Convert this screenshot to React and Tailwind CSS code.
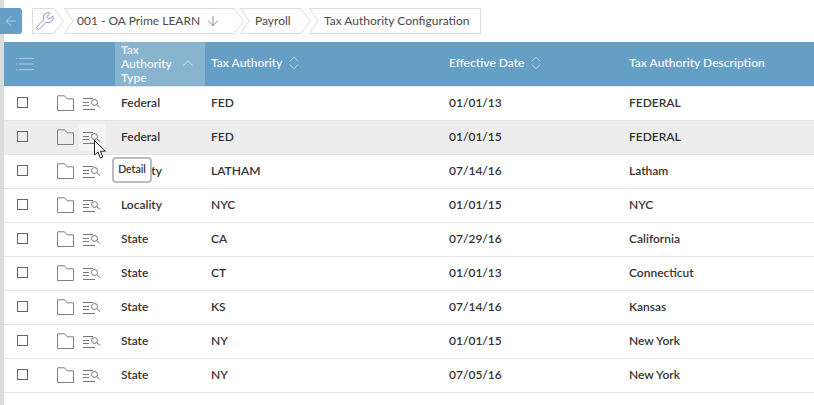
import { ArrowDown, ArrowLeft, ChevronUp, Wrench } from 'lucide-react';

const rows = [
  ['Federal', 'FED', '01/01/13', 'FEDERAL'],
  ['Federal', 'FED', '01/01/15', 'FEDERAL'],
  ['Locality', 'LATHAM', '07/14/16', 'Latham'],
  ['Locality', 'NYC', '01/01/15', 'NYC'],
  ['State', 'CA', '07/29/16', 'California'],
  ['State', 'CT', '01/01/13', 'Connecticut'],
  ['State', 'KS', '07/14/16', 'Kansas'],
  ['State', 'NY', '01/01/15', 'New York'],
  ['State', 'NY', '07/05/16', 'New York'],
];

function Crumb({ width, first, last, children, className }) {
  const h = 26;
  const w = width;
  const right = last ? `H${w - 0.5}V${h - 0.5}` : `H${w - 10}L${w - 0.5} 13L${w - 10} ${h - 0.5}`;
  const left = first ? 'H.5Z' : 'H.5L9 13Z';
  return (
    <div className={`relative h-[26px] flex items-center shrink-0 ${className || ''}`} style={{ width: w }}>
      <svg width={w} height={h} className="absolute inset-0" fill="white" stroke="#dcdcdc">
        <path d={`M.5 .5${right}${left}`} />
      </svg>
      <div className="relative flex items-center whitespace-nowrap">{children}</div>
    </div>
  );
}

function SortIcon() {
  return (
    <svg width="10" height="14" viewBox="0 0 10 14" fill="none" stroke="#b9d4e6" strokeWidth="1">
      <path d="M.8 5.5L5 1.2l4.2 4.3M.8 8.5L5 12.8l4.2-4.3" />
    </svg>
  );
}

function FolderIcon() {
  return (
    <svg width="17" height="16" viewBox="0 0 17 16" fill="none" stroke="#808080" strokeWidth="1">
      <path d="M.5 15.5V.8h7l2.6 3h6.4v11.7z" />
    </svg>
  );
}

function DetailIcon() {
  return (
    <svg width="18" height="13" viewBox="0 0 18 13" fill="none" stroke="#777" strokeWidth="1">
      <path d="M0 1.5h10M0 5.5h6M0 8.5h6M0 12.5h12" />
      <circle cx="11.5" cy="5.5" r="3" />
      <path d="M13.8 7.8l3.4 2.8" />
    </svg>
  );
}

function Row({ row, index }) {
  const hovered = index === 1;
  return (
    <div
      className={`grid grid-cols-[111px_90px_238px_180px_1fr] h-[34px] items-center border-b border-[#e6e6e6] text-[12px] font-semibold text-[#333] ${hovered ? 'bg-[#ededed]' : 'bg-white'}`}
    >
      <div className="flex items-center h-full">
        <div className="w-[11px] h-[11px] border border-[#666] ml-[13px] mb-[2px]" />
        <div className="ml-[29px] -mt-[1px]"><FolderIcon /></div>
        <div className={`ml-[5px] w-[27px] h-[27px] rounded-[3px] flex items-center pl-[4px] ${hovered ? 'bg-[#f5f5f5]' : ''}`}>
          <DetailIcon />
        </div>
      </div>
      <div className="pl-[6px] pb-[2px]">{row[0]}</div>
      <div className="pl-[6px] pb-[2px]">{row[1]}</div>
      <div className="pl-[6px] pb-[2px]">{row[2]}</div>
      <div className="pl-[6px] pb-[2px]">{row[3]}</div>
    </div>
  );
}

export default function App() {
  return (
    <div className="relative w-[814px] h-[405px] overflow-hidden bg-white font-['Lato',sans-serif] pl-[4px]">
      <div className="absolute left-0 top-0 bottom-0 w-[4px] bg-[#dcdcdc]" />

      {/* Breadcrumb */}
      <div className="relative h-[42px] flex items-start pt-[8px] -ml-[4px]">
        <div className="w-[22px] h-[26px] bg-[#659fc5] rounded-r-[3px] flex items-center justify-center shrink-0">
          <ArrowLeft size={16} strokeWidth={1} className="text-[#d5e5f0]" />
        </div>
        <div className="flex items-center ml-[10px] text-[12px] text-[#4a4a4a]">
          <Crumb width={32} first>
            <Wrench size={20} strokeWidth={1} className="ml-[3px] text-[#8a72c0]" />
          </Crumb>
          <Crumb width={180}>
            <span className="ml-[13px]">001 - OA Prime LEARN</span>
            <ArrowDown size={16} strokeWidth={1} className="ml-[5px] text-[#555]" />
          </Crumb>
          <Crumb width={71} className="-ml-[4px]">
            <span className="ml-[15px]">Payroll</span>
          </Crumb>
          <Crumb width={172} last className="-ml-[2px]">
            <span className="ml-[15px]">Tax Authority Configuration</span>
          </Crumb>
        </div>
      </div>

      {/* Table header */}
      <div className="border-b border-[#e6e6e6]">
        <div className="grid grid-cols-[111px_90px_238px_180px_1fr] h-[44px] bg-[#659fc5] text-[12px] font-semibold text-[#f0f6fa] items-center">
          <div className="pl-[12px]">
            <svg width="18" height="12" viewBox="0 0 18 12" fill="none" stroke="#a9cbe0" strokeWidth="1">
              <path d="M3 .5h15M3 6h15M3 11.5h15M0 .5h1.5M0 6h1.5M0 11.5h1.5" />
            </svg>
          </div>
          <div className="h-full bg-[#88b4cf] flex items-center pl-[6px] leading-[14px]">
            <span className="w-[58px]">Tax Authority Type</span>
            <ChevronUp size={18} strokeWidth={1} className="-mt-[3px] text-[#e2eef5]" />
          </div>
          <div className="pl-[6px] pb-[2px] flex items-center gap-[7px]">Tax Authority <SortIcon /></div>
          <div className="pl-[6px] pb-[2px] flex items-center gap-[7px]">Effective Date <SortIcon /></div>
          <div className="pl-[6px] pb-[2px]">Tax Authority Description</div>
        </div>
      </div>

      {rows.map((row, i) => <Row key={i} row={row} index={i} />)}

      {/* Tooltip */}
      <div className="absolute left-[112px] top-[157px] h-[26px] w-[40px] bg-white border-2 border-[#bbb] rounded-[4px] flex items-center justify-center text-[10.5px] font-semibold text-[#333]">
        Detail
      </div>

      {/* Cursor */}
      <svg className="absolute left-[94px] top-[140px]" width="13" height="20" viewBox="0 0 13 20" fill="white" stroke="#222" strokeWidth="1">
        <path d="M.5.5v14.5l3.5-3 2.3 6 2.5-1-2.4-5.8h5z" />
      </svg>
    </div>
  );
}
